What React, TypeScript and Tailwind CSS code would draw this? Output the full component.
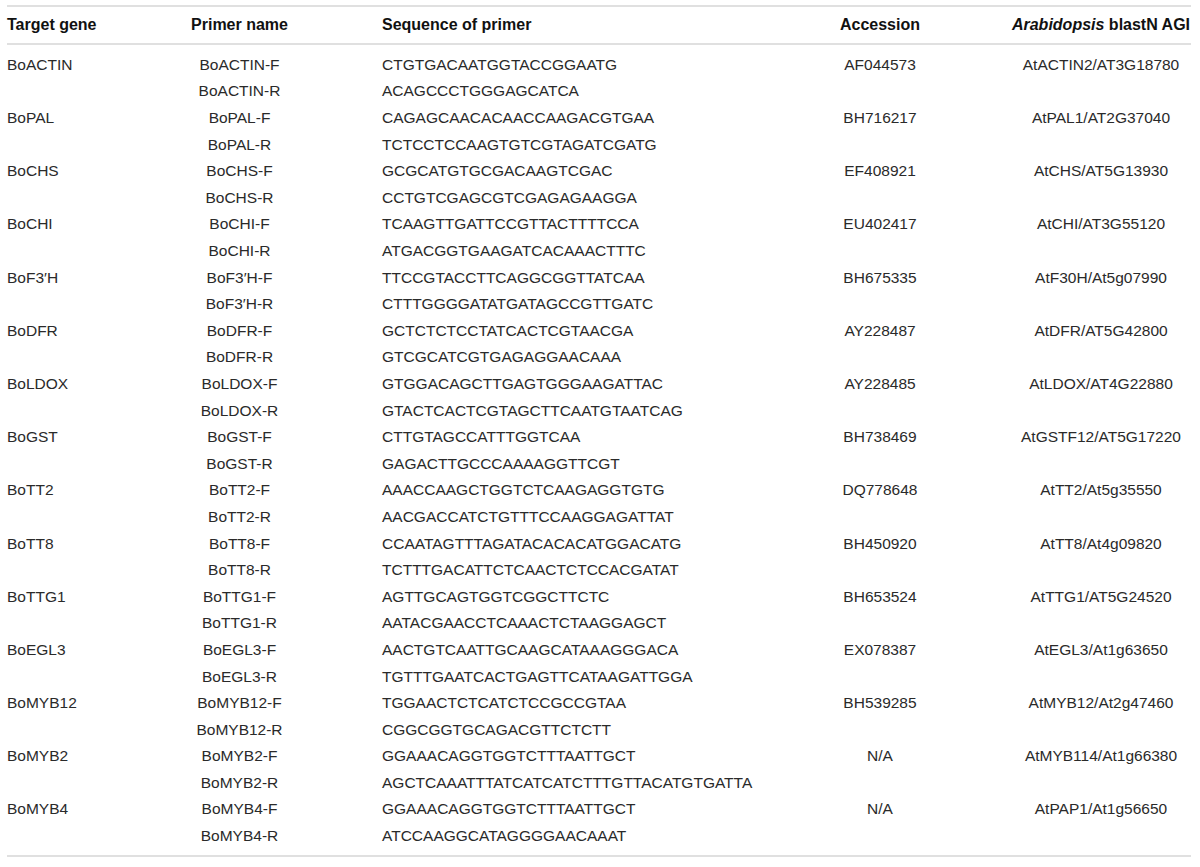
import React from "react";

type Row = { gene: string; f: string; r: string; fs: string; rs: string; acc: string; agi: string };

const rows: Row[] = [
  { gene: "BoACTIN", f: "BoACTIN-F", r: "BoACTIN-R", fs: "CTGTGACAATGGTACCGGAATG", rs: "ACAGCCCTGGGAGCATCA", acc: "AF044573", agi: "AtACTIN2/AT3G18780" },
  { gene: "BoPAL", f: "BoPAL-F", r: "BoPAL-R", fs: "CAGAGCAACACAACCAAGACGTGAA", rs: "TCTCCTCCAAGTGTCGTAGATCGATG", acc: "BH716217", agi: "AtPAL1/AT2G37040" },
  { gene: "BoCHS", f: "BoCHS-F", r: "BoCHS-R", fs: "GCGCATGTGCGACAAGTCGAC", rs: "CCTGTCGAGCGTCGAGAGAAGGA", acc: "EF408921", agi: "AtCHS/AT5G13930" },
  { gene: "BoCHI", f: "BoCHI-F", r: "BoCHI-R", fs: "TCAAGTTGATTCCGTTACTTTTCCA", rs: "ATGACGGTGAAGATCACAAACTTTC", acc: "EU402417", agi: "AtCHI/AT3G55120" },
  { gene: "BoF3\u2032H", f: "BoF3\u2032H-F", r: "BoF3\u2032H-R", fs: "TTCCGTACCTTCAGGCGGTTATCAA", rs: "CTTTGGGGATATGATAGCCGTTGATC", acc: "BH675335", agi: "AtF30H/At5g07990" },
  { gene: "BoDFR", f: "BoDFR-F", r: "BoDFR-R", fs: "GCTCTCTCCTATCACTCGTAACGA", rs: "GTCGCATCGTGAGAGGAACAAA", acc: "AY228487", agi: "AtDFR/AT5G42800" },
  { gene: "BoLDOX", f: "BoLDOX-F", r: "BoLDOX-R", fs: "GTGGACAGCTTGAGTGGGAAGATTAC", rs: "GTACTCACTCGTAGCTTCAATGTAATCAG", acc: "AY228485", agi: "AtLDOX/AT4G22880" },
  { gene: "BoGST", f: "BoGST-F", r: "BoGST-R", fs: "CTTGTAGCCATTTGGTCAA", rs: "GAGACTTGCCCAAAAGGTTCGT", acc: "BH738469", agi: "AtGSTF12/AT5G17220" },
  { gene: "BoTT2", f: "BoTT2-F", r: "BoTT2-R", fs: "AAACCAAGCTGGTCTCAAGAGGTGTG", rs: "AACGACCATCTGTTTCCAAGGAGATTAT", acc: "DQ778648", agi: "AtTT2/At5g35550" },
  { gene: "BoTT8", f: "BoTT8-F", r: "BoTT8-R", fs: "CCAATAGTTTAGATACACACATGGACATG", rs: "TCTTTGACATTCTCAACTCTCCACGATAT", acc: "BH450920", agi: "AtTT8/At4g09820" },
  { gene: "BoTTG1", f: "BoTTG1-F", r: "BoTTG1-R", fs: "AGTTGCAGTGGTCGGCTTCTC", rs: "AATACGAACCTCAAACTCTAAGGAGCT", acc: "BH653524", agi: "AtTTG1/AT5G24520" },
  { gene: "BoEGL3", f: "BoEGL3-F", r: "BoEGL3-R", fs: "AACTGTCAATTGCAAGCATAAAGGGACA", rs: "TGTTTGAATCACTGAGTTCATAAGATTGGA", acc: "EX078387", agi: "AtEGL3/At1g63650" },
  { gene: "BoMYB12", f: "BoMYB12-F", r: "BoMYB12-R", fs: "TGGAACTCTCATCTCCGCCGTAA", rs: "CGGCGGTGCAGACGTTCTCTT", acc: "BH539285", agi: "AtMYB12/At2g47460" },
  { gene: "BoMYB2", f: "BoMYB2-F", r: "BoMYB2-R", fs: "GGAAACAGGTGGTCTTTAATTGCT", rs: "AGCTCAAATTTATCATCATCTTTGTTACATGTGATTA", acc: "N/A", agi: "AtMYB114/At1g66380" },
  { gene: "BoMYB4", f: "BoMYB4-F", r: "BoMYB4-R", fs: "GGAAACAGGTGGTCTTTAATTGCT", rs: "ATCCAAGGCATAGGGGAACAAAT", acc: "N/A", agi: "AtPAP1/At1g56650" },
];

const grid = "grid grid-cols-[91px_283px_368px_262px_180px]";

export default function App() {
  return (
    <div
      className="w-[1200px] h-[867px] bg-white pl-[7px] pt-[5px]"
      style={{ fontFamily: '"Liberation Sans", Arial, sans-serif' }}
    >
      <div className="w-[1184px] border-t-2 border-b-2 border-[#e0e0e0]">
        <div className={`${grid} h-[38px] items-center border-b-2 border-[#e0e0e0] text-[16px] font-bold text-[#111]`}>
          <div className="whitespace-nowrap">Target gene</div>
          <div className="text-center whitespace-nowrap">Primer name</div>
          <div className="pl-px whitespace-nowrap">Sequence of primer</div>
          <div className="text-center whitespace-nowrap">Accession</div>
          <div className="text-center whitespace-nowrap">
            <span className="italic">Arabidopsis</span> blastN AGI
          </div>
        </div>
        <div className="pt-[6.2px] pb-[5.8px] text-[15.5px] text-[#2a2a2a]">
          {rows.map((r) => (
            <React.Fragment key={r.gene}>
              <div className={`${grid} h-[26.6px] items-center`}>
                <div className="whitespace-nowrap">{r.gene}</div>
                <div className="text-center whitespace-nowrap">{r.f}</div>
                <div className="pl-px whitespace-nowrap">{r.fs}</div>
                <div className="text-center whitespace-nowrap">{r.acc}</div>
                <div className="text-center whitespace-nowrap">{r.agi}</div>
              </div>
              <div className={`${grid} h-[26.6px] items-center`}>
                <div></div>
                <div className="text-center whitespace-nowrap">{r.r}</div>
                <div className="pl-px whitespace-nowrap">{r.rs}</div>
                <div></div>
                <div></div>
              </div>
            </React.Fragment>
          ))}
        </div>
      </div>
    </div>
  );
}
